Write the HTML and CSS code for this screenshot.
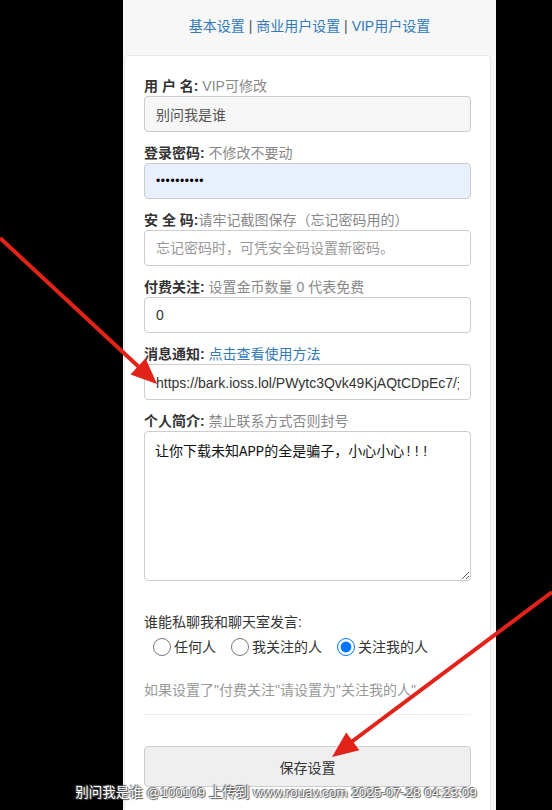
FILE: index.html
```html
<!DOCTYPE html>
<html lang="zh-CN">
<head>
  <meta charset="UTF-8" />
  <meta name="viewport" content="width=device-width, initial-scale=1.0"/>
  <title>个人设置</title>
  <link rel="stylesheet" href="styles.css">
</head>
<body>
  <div class="page">
    <div class="tabs">
      <a href="#">基本设置</a> | <a href="#">商业用户设置</a> | <a href="#">VIP用户设置</a>
    </div>
    <div class="card">
      <div class="group">
        <label><b>用 户 名:</b> <span class="hint">VIP可修改</span></label>
        <input type="text" class="field readonly" value="别问我是谁" readonly />
      </div>
      <div class="group">
        <label><b>登录密码:</b> <span class="hint">不修改不要动</span></label>
        <input type="password" class="field autofill" value="1234567890" />
      </div>
      <div class="group">
        <label><b>安 全 码:</b><span class="hint">请牢记截图保存（忘记密码用的）</span></label>
        <input type="text" class="field" placeholder="忘记密码时，可凭安全码设置新密码。" />
      </div>
      <div class="group">
        <label><b>付费关注:</b> <span class="hint">设置金币数量 0 代表免费</span></label>
        <input type="text" class="field" value="0" />
      </div>
      <div class="group">
        <label><b>消息通知:</b> <a href="#">点击查看使用方法</a></label>
        <input type="text" class="field" value="https://bark.ioss.lol/PWytc3Qvk49KjAQtCDpEc7/这里改成你想要的内容" />
      </div>
      <div class="group">
        <label><b>个人简介:</b> <span class="hint">禁止联系方式否则封号</span></label>
        <textarea class="field bio">让你下载未知APP的全是骗子，小心小心!!!</textarea>
      </div>

      <p class="who">谁能私聊我和聊天室发言:</p>
      <div class="radios">
        <label><input type="radio" name="who" />任何人</label>
        <label><input type="radio" name="who" />我关注的人</label>
        <label><input type="radio" name="who" checked />关注我的人</label>
      </div>
      <p class="note">如果设置了"付费关注"请设置为"关注我的人"</p>
      <hr />
      <button class="save">保存设置</button>
    </div>
  </div>

  <svg class="arrows" width="552" height="810" viewBox="0 0 552 810">
    <line x1="0" y1="238" x2="140" y2="368" />
    <polygon points="157,384 130.5,374.4 145.5,358.3" />
    <line x1="552" y1="592" x2="350" y2="743" />
    <polygon points="332,757 359.4,750.2 346.2,732.6" />
  </svg>

  <div class="stamp">别问我是谁 @100109 上传到 www.rouav.com 2025-07-28 04:23:09</div>
</body>
</html>
```

FILE: styles.css
```css
body {
  margin: 0;
  background: #000;
  font-family: "Liberation Sans", "Noto Sans CJK SC", sans-serif;
  font-size: 14px;
  color: #333;
  height: 810px;
  overflow: hidden;
  position: relative;
}
a { color: #337ab7; text-decoration: none; }
.page {
  width: 373px;
  margin-left: 123px;
  background: #f7f7f7;
  min-height: 810px;
}
.tabs {
  height: 55px;
  line-height: 52px;
  text-align: center;
  font-size: 14px;
  color: #555;
}
.card {
  background: #fff;
  margin: 0 5px 0 1px;
  border: 1px solid #e8e8e8;
  border-radius: 4px;
  padding: 21px 19px 40px;
}
.group { margin-bottom: 12px; }
.group label {
  display: block;
  line-height: 19px;
  height: 19px;
  white-space: nowrap;
}
.group b { color: #333; }
.hint { color: #888; }
.field {
  display: block;
  box-sizing: border-box;
  width: 100%;
  height: 36px;
  padding: 6px 11px;
  border: 1px solid #ccc;
  border-radius: 4px;
  background: #fff;
  font-family: "Liberation Sans", "Noto Sans CJK SC", sans-serif;
  font-size: 14px;
  color: #333;
}
.field::placeholder { color: #999; }
.readonly { background: #f6f6f6; color: #555; }
.autofill { background: #e8f0fe; color: #000; letter-spacing: 0.6px; font-size: 12px; }
.bio {
  height: 150px;
  padding: 10px 10px;
  font-family: "Liberation Mono", "Noto Sans CJK SC", monospace;
  font-size: 14px;
  line-height: 20px;
  color: #111;
  resize: vertical;
}
.who {
  margin: 31px 0 0;
  line-height: 20px;
}
.radios {
  display: flex;
  gap: 15px;
  margin: 5px 0 0 9px;
  line-height: 20px;
}
.radios label { display: flex; align-items: center; }
.radios input {
  width: 18px;
  height: 18px;
  margin: 0 3px 0 0;
}
.note {
  color: #999;
  margin: 23px 0 0;
  line-height: 20px;
}
hr {
  border: 0;
  border-top: 1px solid #eee;
  margin: 14px 0 31px;
}
.save {
  display: block;
  width: 100%;
  height: 41px;
  background: #efefef;
  border: 1px solid #ccc;
  border-radius: 4px;
  font-family: "Liberation Sans", "Noto Sans CJK SC", sans-serif;
  font-size: 14px;
  color: #333;
}
.arrows {
  position: absolute;
  top: 0;
  left: 0;
  pointer-events: none;
}
.arrows line { stroke: #e2231a; stroke-width: 4; }
.arrows polygon { fill: #e2231a; }
.stamp {
  position: absolute;
  left: 0;
  right: 0;
  top: 783px;
  text-align: center;
  font-size: 13.5px;
  line-height: 20px;
  color: #fff;
  text-shadow: 1px 1px 1px #555, -1px -1px 1px #555, 0 0 1px #333;
}
```
